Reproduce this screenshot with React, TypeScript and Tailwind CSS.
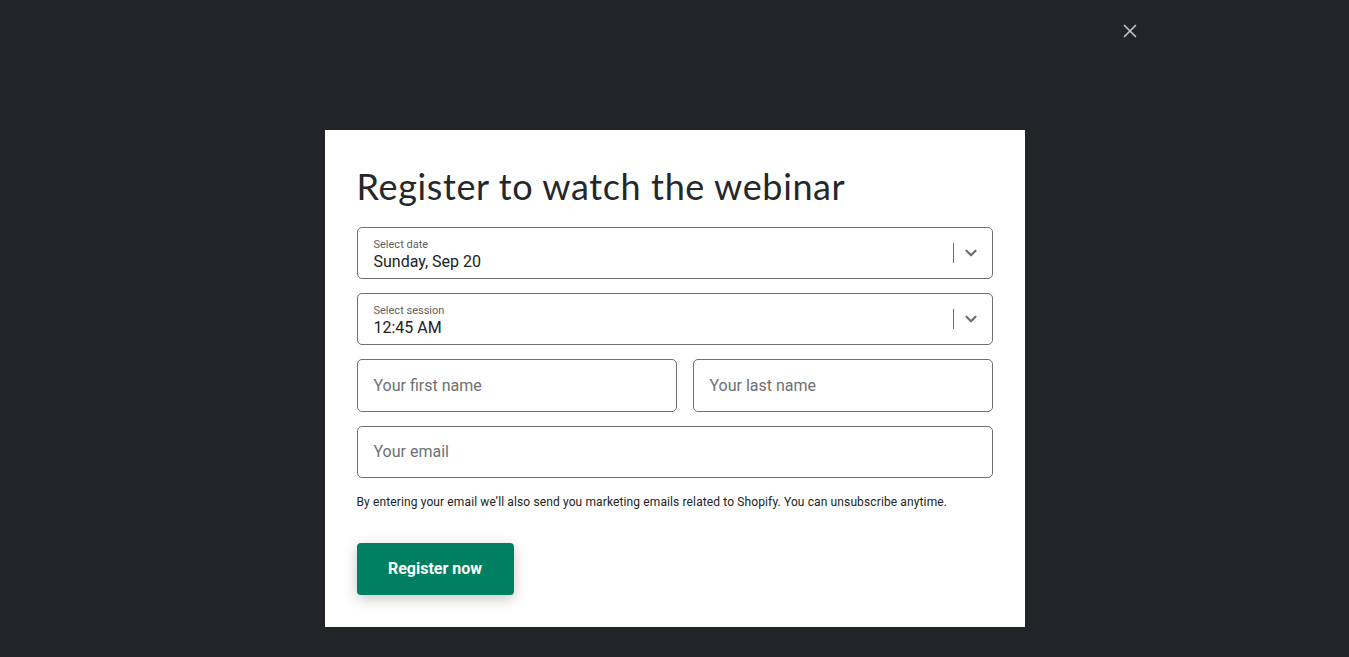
import { ChevronDown, X } from "lucide-react";

function SelectBox({ label, value }: { label: string; value: string }) {
  return (
    <div className="flex h-[52px] items-center rounded-[5px] border border-[#6d7175] bg-white pl-4 pr-3">
      <div className="flex flex-1 flex-col pt-[3px]">
        <span className="text-[11px] leading-[14px] text-[#5c5f62]">{label}</span>
        <span className="text-[16px] leading-[20px] text-[#202223]">{value}</span>
      </div>
      <div className="h-[20px] w-px bg-[#6d7175]" />
      <ChevronDown className="ml-2 h-[18px] w-[18px] text-[#6d7175]" strokeWidth={3} />
    </div>
  );
}

function TextBox({ placeholder, className }: { placeholder: string; className?: string }) {
  return (
    <div
      className={
        "flex items-center rounded-[5px] border border-[#6d7175] bg-white px-4 text-[16px] text-[#6d7175] " +
        (className ?? "")
      }
    >
      {placeholder}
    </div>
  );
}

export default function App() {
  return (
    <div className="relative flex min-h-[657px] w-full items-start justify-center bg-[#232428] pt-[130px] font-['Roboto',sans-serif]">
      <button className="absolute right-[208px] top-[20px] text-[#c4c5c7]">
        <X className="h-[22px] w-[22px]" strokeWidth={1.8} />
      </button>

      <div className="w-[700px] bg-white px-8 pb-8 pt-[35px]">
        <h1 className="font-['Lato',sans-serif] text-[36px] font-normal leading-[42px] tracking-[0.62px] text-[#262729]">
          Register to watch the webinar
        </h1>

        <div className="mt-[20px] flex flex-col gap-[14px]">
          <SelectBox label="Select date" value="Sunday, Sep 20" />
          <SelectBox label="Select session" value="12:45 AM" />
          <div className="flex gap-4">
            <TextBox placeholder="Your first name" className="h-[53px] w-[320px]" />
            <TextBox placeholder="Your last name" className="h-[53px] flex-1" />
          </div>
          <TextBox placeholder="Your email" className="h-[52px]" />
        </div>

        <p className="mt-[16px] text-[12px] leading-[16px] tracking-[0.12px] text-[#212326]">
          By entering your email we’ll also send you marketing emails related to Shopify. You can unsubscribe anytime.
        </p>

        <button className="mt-[33px] h-[52px] w-[157px] rounded-[4px] bg-[#008060] text-[16px] font-bold text-white shadow-[0_4px_14px_rgba(0,0,0,0.22)]">
          Register now
        </button>
      </div>
    </div>
  );
}
